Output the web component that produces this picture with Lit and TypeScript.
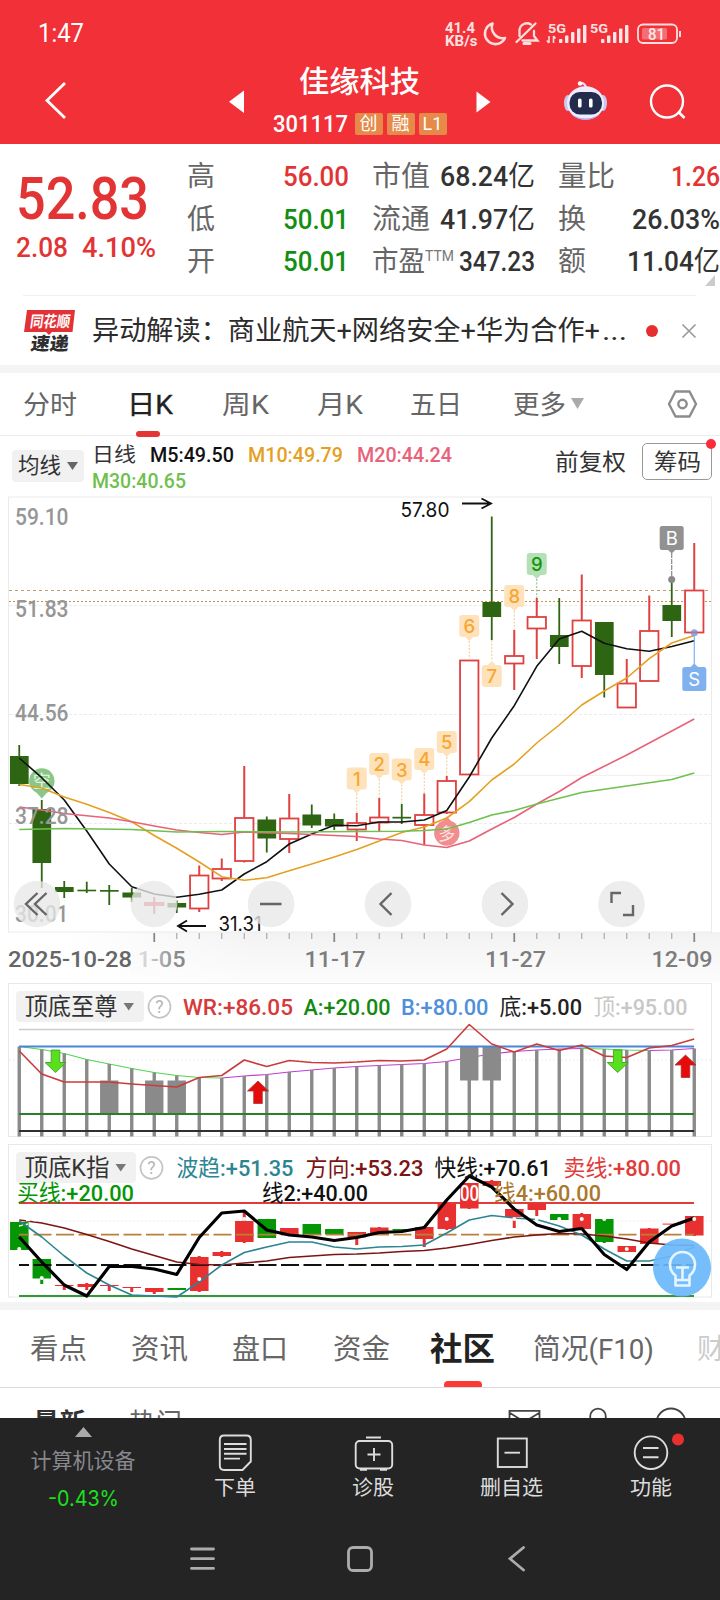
import { LitElement, html, svg, css } from "lit";
import { customElement, property } from "lit/decorators.js";

/** A line of text condensed or widened to a given advance width. */
@customElement("fit-text")
class FitText extends LitElement {
  @property({ type: Number }) w = 0;
  @property() text = "";
  static styles = css`
    :host { display: inline-block; white-space: pre; }
    .t { display: inline-block; transform-origin: 0 50%; }
    .han { font-weight: var(--han-weight, inherit); }
  `;
  firstUpdated() {
    const s = this.renderRoot.querySelector(".t") as HTMLElement;
    const n = s.getBoundingClientRect().width;
    this.style.width = this.w + "px";
    if (n) s.style.transform = `scaleX(${this.w / n})`;
  }
  render() {
    const parts = this.text.split(/([\u4e00-\u9fff]+)/).filter(Boolean);
    return html`<span class="t">${parts.map(p => /[\u4e00-\u9fff]/.test(p) ? html`<span class="han">${p}</span>` : p)}</span>`;
  }
}

const fit = (text: string, w: number, cls = "") =>
  html`<fit-text class=${cls} .w=${w} .text=${text}></fit-text>`;

/** Chart text: Han characters stay regular while figures take the given weight. */
const label = (text: string, x: number, y: number, w: number, size: number, fill: string, weight = 400) =>
  svg`<text x=${x} y=${y} font-size=${size} fill=${fill} font-weight=${weight} textLength=${w} lengthAdjust="spacingAndGlyphs">${
    text.split(/([\u4e00-\u9fff]+)/).filter(Boolean).map(p => /[\u4e00-\u9fff]/.test(p) ? svg`<tspan font-weight="400">${p}</tspan>` : p)}</text>`;

const X = (i: number) => 19.25 + 22.5 * i;
type P = [number, number];
const line = (pts: P[], color: string, width = 1.6) =>
  svg`<polyline points=${pts.map(([i, y]) => `${X(i)},${y}`).join(" ")} fill="none" stroke=${color} stroke-width=${width} stroke-linejoin="round"/>`;
const seq = (ys: number[], from = 0): P[] => ys.map((y, i) => [i + from, y]);

// up flag, high, body top, body bottom, low
const CANDLES: [number, number, number, number, number][] = [
  [0, 745, 756, 784, 786], [0, 800, 809, 863, 888], [0, 881, 887, 892, 898], [0, 881.7, 889.7, 891.3, 893],
  [0, 885, 890, 891.7, 905], [0, 888, 892.5, 897.5, 902], [1, 897, 903, 905, 914], [0, 900.5, 903, 907.5, 913],
  [1, 865.5, 875.5, 908.5, 912], [1, 858.5, 869, 878.5, 881], [1, 766, 818, 861, 862.5], [0, 816.5, 819.5, 838.5, 852.5],
  [1, 794, 818.5, 839, 853], [0, 804.5, 814.5, 825.5, 828], [0, 813.5, 819, 826.5, 830], [1, 813, 823, 829.5, 841],
  [1, 798, 817.5, 822.5, 831], [0, 804, 816.8, 818.5, 824], [1, 793.5, 815, 825, 845], [1, 776, 781, 812.5, 814],
  [1, 660.5, 660.5, 774.5, 774.5], [0, 516.5, 602, 617, 640], [1, 630, 656, 663.5, 690], [1, 598, 617, 628.5, 659],
  [0, 598, 635, 647, 664], [1, 574.5, 620.5, 666, 678], [0, 622, 622, 675, 697.5], [1, 659, 683.5, 707.5, 707.5],
  [1, 595.5, 631, 681, 681], [0, 579, 605, 621, 637], [1, 543, 590.5, 632.5, 632.5],
];
const M5 = [758, 777.7, 800, 831, 864, 886.7, 894, 897.3, 894.3, 890, 874, 861.7, 844, 834, 825.3, 825.8, 822, 822, 820, 810.5, 777, 738, 705.7, 666.3, 639, 631.3, 643.3, 648.7, 651.3, 646.5, 640.7];
const M10 = [784.5, 788, 797, 804.3, 812.5, 821.7, 835.5, 848.3, 862, 876.7, 880.3, 877.7, 870.7, 864, 857, 849.5, 841, 832.5, 827, 818, 801.7, 780, 764, 743, 725, 705, 691, 678, 658.7, 643, 635.5];
const M20: P[] = [[0, 807], [1, 810], [2, 813.5], [4, 818], [5, 821.7], [6, 826], [7, 830], [8, 832.5], [9, 834.5], [10, 832], [12, 833.5], [15, 836.5], [16, 839], [17, 840.5], [18, 845], [19, 847.5], [20, 841], [21, 829], [22, 817.5], [23, 804], [24, 791.5], [25, 777.5], [27, 755], [29, 731], [30, 719]];
const M30: P[] = [[0, 829.5], [2, 828.5], [5, 829.5], [7, 832], [9, 831.5], [12, 832], [15, 831.5], [17, 831.3], [18, 830.5], [19, 829], [20, 822.5], [21, 815], [22, 810.5], [23, 804], [25, 792.5], [29, 779.5], [30, 773]];

// number, candle index, tag top, tag below the candle?, end of leader
const TAGS: [string, number, number, boolean, number][] = [
  ["1", 15, 767.5, false, 813], ["2", 16, 753, false, 798], ["3", 17, 758.5, false, 804], ["4", 18, 748, false, 793],
  ["5", 19, 731, false, 776], ["6", 20, 615, false, 660], ["7", 21, 665, true, 640], ["8", 22, 585, false, 630], ["9", 23, 553, false, 598],
];

const BARS = [1046.5, 1049.5, 1053.5, 1059.5, 1064, 1068.5, 1072.5, 1075.5, 1077.5, 1078, 1076, 1074.5, 1072, 1070, 1068, 1066.5, 1065.5, 1064.5, 1063.5, 1061.5, 1057.5, 1054, 1051.5, 1050, 1049, 1048.5, 1049, 1050, 1050.5, 1050, 1048.5];
const WR = [1051, 1074, 1082, 1082, 1082, 1084, 1085.5, 1087, 1077.5, 1075.5, 1060, 1066.5, 1060.5, 1062.5, 1063, 1062, 1060.5, 1061, 1060, 1049, 1024.5, 1044, 1052, 1044, 1050.5, 1045, 1056, 1057.5, 1048, 1045.5, 1039];

// up flag, body top, body bottom, high, low
const K2: [number, number, number, number, number][] = [
  [0, 1222, 1250, 1222, 1250], [0, 1259, 1278.5, 1259, 1284], [1, 1285, 1286, 1285, 1290], [1, 1284, 1287, 1283, 1290],
  [1, 1285, 1286, 1285, 1291], [1, 1287, 1288, 1287, 1292], [1, 1288, 1292, 1288, 1294], [0, 1288, 1290, 1288, 1290],
  [1, 1257, 1291, 1256, 1292], [1, 1252, 1256, 1251, 1257], [1, 1221, 1242, 1212, 1243], [0, 1219, 1238, 1219, 1238],
  [1, 1228, 1234.5, 1228, 1234], [0, 1224, 1235, 1224, 1235], [0, 1229, 1234.5, 1229, 1234], [1, 1232, 1237.5, 1232, 1245],
  [1, 1227.5, 1235, 1227, 1235], [0, 1229, 1230.5, 1229, 1230], [1, 1227, 1239, 1226, 1247], [1, 1203.5, 1229, 1203, 1230],
  [1, 1183, 1208.5, 1183, 1209], [1, 1181, 1186, 1180, 1186], [1, 1209, 1217, 1209, 1228], [1, 1203.5, 1210, 1203, 1216],
  [0, 1214, 1220, 1214, 1220], [1, 1214, 1229, 1213, 1230], [0, 1219, 1242, 1219, 1243], [1, 1246, 1252, 1246, 1252],
  [1, 1228.5, 1244, 1228, 1244], [1, 1223.6, 1224.6, 1224, 1224], [1, 1216, 1235.5, 1216, 1236],
];
const FAST = [1237, 1262, 1285, 1296, 1266.5, 1266.5, 1269, 1274.5, 1237.5, 1213, 1211, 1230, 1235, 1237, 1240.5, 1237.5, 1232.5, 1231.5, 1227.5, 1200, 1176, 1187, 1209, 1225, 1231.5, 1228.5, 1254.5, 1269.5, 1242, 1226, 1218];
const TREND = [1221, 1237, 1256, 1273, 1285, 1295, 1296, 1297, 1282, 1265, 1252.5, 1247, 1242, 1242, 1247, 1249, 1247, 1246.5, 1245, 1233, 1220, 1215.5, 1218, 1219.5, 1226, 1235, 1249, 1261, 1261, 1256, 1247];
const DIR = [1220, 1223, 1228, 1234.5, 1241.5, 1249, 1255.5, 1262, 1264.5, 1265, 1263, 1261, 1257.5, 1256, 1254.5, 1254, 1253, 1251.5, 1250.5, 1248, 1244.5, 1240.5, 1237, 1235, 1233.5, 1234, 1236, 1239, 1243, 1245, 1245.5];
const DOTS: P[] = [[0, 1249], [1, 1278], [8, 1279], [10, 1219], [19, 1219], [22, 1219], [23, 1219], [24, 1219], [25, 1219], [26, 1219], [27, 1249], [30, 1219]];

@customElement("k-chart")
class KChart extends LitElement {
  static styles = css`
    :host { display: block; height: 486px; }
    svg { display: block; font-family: Roboto, "Noto Sans CJK SC", sans-serif; }
    .num { font-family: Inter, Roboto, sans-serif; }
  `;
  render() {
    const G = "#2e6512", R = "#e04040";
    return html`<svg width="720" height="486" viewBox="0 496 720 486">
      <defs>
        <linearGradient id="g" x1="0" y1="0" x2="0" y2="1"><stop offset="0" stop-color="#f0f0f0"/><stop offset="1" stop-color="#fcfcfc"/></linearGradient>
        <linearGradient id="w" x1="0" y1="0" x2="1" y2="0"><stop offset="0" stop-color="#fff"/><stop offset=".25" stop-color="#fff"/><stop offset="1" stop-color="#fff" stop-opacity="0"/></linearGradient>
        <linearGradient id="f" x1="0" y1="0" x2="1" y2="0"><stop offset="0" stop-color="#fbfbfb"/><stop offset=".25" stop-color="#fbfbfb" stop-opacity=".72"/><stop offset="1" stop-color="#fbfbfb" stop-opacity="0"/></linearGradient>
      </defs>
      <rect x="0" y="932" width="720" height="50" fill="url(#g)" opacity=".85"/>
      <rect x="0" y="932" width="260" height="50" fill="url(#w)"/>
      <rect x="8.5" y="497" width="703" height="435" fill="#fff" stroke="#ebebeb"/>
      ${[605.5, 714.5, 823.5].map(y => svg`<path d="M9 ${y}H711" stroke="#ebebeb" stroke-dasharray="3 2"/>`)}
      <path d="M479 775.3H711" stroke="#eee"/>
      <path d="M9 590.5H711" stroke="#b89d6d" stroke-dasharray="3 3"/>
      <path d="M9 601.5H711" stroke="#c6924a" stroke-dasharray="2 2"/>
      ${CANDLES.map(([up, h, a, b, l], i) => up
        ? svg`<path d="M${X(i)} ${h}V${a}M${X(i)} ${b}V${l}" stroke=${R} stroke-width="2"/><rect x=${X(i) - 9.2} y=${a} width="18.4" height=${b - a} fill="#fff" stroke=${R} stroke-width="1.8"/>`
        : svg`<path d="M${X(i)} ${h}V${l}" stroke=${G} stroke-width="1.8"/><rect x=${X(i) - 9.3} y=${a} width="18.7" height=${b - a} fill=${G}/>`)}
      <g opacity=".8">
        <path d="M36 792l5.800 6.500l5.800-6.500z" fill="#6cb96a"/><circle cx="41.800" cy="781" r="12.700" fill="#6cb96a"/>
        <text x="41.800" y="788" font-size="18" fill="#d9f0d8" text-anchor="middle">空</text>
      </g>
      <g>
        <path d="M442 822l5-5.500l5 5.500z" fill="#f28d8d"/><circle cx="446.800" cy="833" r="12.700" fill="#f28d8d"/>
        <text x="446.800" y="839.500" font-size="17" fill="#fde0e0" text-anchor="middle">多</text>
      </g>
      ${line(seq(M5), "#111")}
      ${line(seq(M10), "#e5a021")}
      ${line(M20, "#e8627a")}
      ${line(M30, "#6fc04e")}
      ${[["59.10", 525], ["51.83", 617], ["44.56", 721], ["37.28", 823.5], ["30.01", 921.5]].map(([t, y]) => label(t as string, 15, y as number, 53.5, 24, "#969696", 500))}
      ${TAGS.map(([t, i, y, below, end]) => {
        const c = t === "9" ? "#b4e0b4" : "#fee2bc", x = X(i), h = 22;
        const lead = below ? `M${x} ${end}V${y - 4}` : `M${x} ${y + h + 4}V${end}`;
        const tip = below ? `M${x - 5} ${y + 1}L${x} ${y - 4}L${x + 5} ${y + 1}z` : `M${x - 5} ${y + h - 1}L${x} ${y + h + 4}L${x + 5} ${y + h - 1}z`;
        return svg`<path d=${lead} stroke=${t === "9" ? "#7fbf7f" : "#eecb90"} stroke-dasharray="2 1.500"/><path d=${tip} fill=${c}/>
          <rect x=${x - 10} y=${y} width="20" height=${h} rx="3" fill=${c}/>
          <text class="num" x=${x} y=${y + 18} text-anchor="middle" font-size="18.500" font-weight="500" fill=${t === "9" ? "#129612" : "#f8a62f"}>${t}</text>`;
      })}
      <path d="M671.700 553V576" stroke="#888" stroke-width="1.200" stroke-dasharray="5 1"/><circle cx="671.700" cy="579.500" r="3.500" fill="#888"/>
      <path d="M667 549l4.700 4.500l4.700-4.500z" fill="#919191"/><rect x="659.700" y="526" width="24" height="24" rx="2.500" fill="#919191"/>
      <text class="num" x="671.700" y="545" font-size="18.500" fill="#fff" text-anchor="middle">B</text>
      <circle cx="694.300" cy="632.700" r="3.500" fill="#7f8fd0" opacity=".8"/><path d="M694.300 635V665" stroke="#7fb1ef" stroke-width="1.200"/>
      <path d="M689.500 668l4.800-4.500l4.800 4.500z" fill="#7fb1ef"/><rect x="682.300" y="667" width="24" height="24" rx="2.500" fill="#7fb1ef"/>
      <text class="num" x="694.300" y="686" font-size="18.500" fill="#fff" text-anchor="middle">S</text>
      <text class="num" x="400.500" y="516.500" font-size="20" fill="#111" textLength="49" lengthAdjust="spacingAndGlyphs">57.80</text>
      <path d="M462 503.500H491M481.500 498.500L491 503.500L481.500 508.500" fill="none" stroke="#111" stroke-width="1.800"/>
      <text class="num" x="218.500" y="930.700" font-size="20" fill="#111" textLength="43" lengthAdjust="spacingAndGlyphs">31.31</text>
      <path d="M206 926H178M187 920.500L178 926L187 931.500" fill="none" stroke="#111" stroke-width="1.800"/>
      ${[37, 154, 271, 388, 505, 621.5].map(x => svg`<circle cx=${x} cy="904" r="23.300" fill="#e8e8e8" opacity=".78"/>`)}
      <g fill="none" stroke="#666" stroke-width="2.400">
        <path d="M37.500 893L26 904L37.500 915M46.500 893L35 904L46.500 915M260 904H281.500M391.500 893L380.500 904L391.500 915M501.500 893L512.500 904L501.500 915M611.500 903V893H621M633 905V915H623"/>
      </g>
      ${Array.from({ length: 25 }, (_, k) => k + 6).map(i => {
        const major = (i - 6) % 8 === 0;
        return svg`<path d="M${X(i)} 933V${major ? 942 : 939}" stroke=${major ? "#888" : "#aaa"} stroke-width=${major ? 1.8 : 1.2}/>`;
      })}
      ${label("1-05", 137.5, 967.3, 48, 22, "#8a8a8a", 500)}
      <rect x="131" y="945" width="45" height="30" fill="url(#f)"/>
      ${label("2025-10-28", 8, 967.3, 124, 22, "#666", 500)}
      ${label("11-17", 304.5, 967.3, 61, 22, "#7d7d7d", 500)}
      ${label("11-27", 485, 967.3, 61, 22, "#7d7d7d", 500)}
      ${label("12-09", 651.5, 967.3, 61, 22, "#7d7d7d", 500)}
    </svg>`;
  }
}

const arrow = (x: number, y: number, up: boolean) => {
  const d = up ? "M0 0L10.500 10H4.300V22.500H-4.300V10H-10.500z" : "M0 22.500L10.500 12.500H4.300V0H-4.300V12.500H-10.500z";
  return svg`<path transform="translate(${x} ${y})" d=${d} fill=${up ? "#e60b0b" : "#58e01f"} stroke=${up ? "#a33" : "#3a9a20"} stroke-width=".8"/>`;
};
const picker = (x: number, y: number, w: number, text: string, tw: number) => svg`
  <rect x=${x} y=${y} width=${w} height="31" rx="4" fill="#f1f1f1"/>
  ${label(text, x + 8.5, y + 24.3, tw, 23.5, "#333")}
  <path d="M${x + w - 20.5} ${y + 12}h10.500l-5.250 7.500z" fill="#777"/>
  <circle cx=${x + w + 15.5} cy=${y + 15.8} r="11" fill="none" stroke="#c4c4c4" stroke-width="1.700"/>
  <text x=${x + w + 15.5} y=${y + 22} font-size="17.500" fill="#b4b4b4" text-anchor="middle">?</text>`;

@customElement("indicator-panels")
class IndicatorPanels extends LitElement {
  static styles = css`
    :host { display: block; height: 320px; }
    svg { display: block; font-family: Roboto, "Noto Sans CJK SC", sans-serif; }
  `;
  render() {
    return html`<svg width="720" height="320" viewBox="0 982 720 320">
      <rect x="8.500" y="983.500" width="703" height="153" fill="#fff" stroke="#e8e8e8"/>
      ${picker(16, 991, 128, "顶底至尊", 93)}
      ${label("WR:+86.05", 183, 1014.5, 110, 22.5, "#d63a3a", 500)}
      ${label("A:+20.00", 303.5, 1014.5, 87, 22.5, "#128a12", 500)}
      ${label("B:+80.00", 401, 1014.5, 87.5, 22.5, "#4f8fdb", 500)}
      ${label("底:+5.00", 499.5, 1014.5, 82.5, 22.5, "#222", 500)}
      ${label("顶:+95.00", 593.5, 1014.5, 94, 22.5, "#c8c8c8", 500)}
      <path d="M9 1060H711" stroke="#eee" stroke-dasharray="2 2"/>
      <path d="M19 1029.500H694" stroke="#ccc" stroke-width="1.700"/>
      ${line(seq(BARS.slice(0, 10)), "#4fd84f", 1.2)}
      ${line(seq(BARS.slice(9, 26), 9), "#c03cd0", 1.2)}
      ${line(seq(BARS.slice(25, 29), 25), "#4fd84f", 1.2)}
      ${line(seq(BARS.slice(28), 28), "#c03cd0", 1.2)}
      ${BARS.map((y, i) => svg`<path d="M${X(i)} ${y}V1136.500" stroke="#8a8a8a" stroke-width="3.400"/>`)}
      ${[[4, 1080.5], [6, 1080.5], [7, 1080.5], [20, 1047], [21, 1047]].map(([i, y]) => svg`<rect x=${X(i) - 9.2} y=${y} width="18.400" height="33.500" fill="#8a8a8a"/>`)}
      <path d="M19 1046.500H694" stroke="#4a86d8" stroke-width="2"/>
      <path d="M19 1114H694" stroke="#2a7f2a" stroke-width="2"/>
      <path d="M19 1131H694" stroke="#2c322c" stroke-width="2"/>
      ${line(seq(WR), "#c93c3c")}
      ${arrow(55.5, 1050, false)}${arrow(617.7, 1050, false)}${arrow(258, 1081, true)}${arrow(685.5, 1055, true)}

      <rect x="8.500" y="1144.500" width="703" height="152.500" fill="#fff" stroke="#e8e8e8"/>
      ${picker(16, 1152, 120, "顶底K指", 85)}
      <path d="M9 1221H711" stroke="#eee" stroke-dasharray="2 2"/>
      <path d="M19 1203H694" stroke="#e23b3b" stroke-width="1.900"/>
      ${K2.map(([up, a, b, h, l], i) => {
        const c = up ? "#e83030" : "#059605";
        return svg`<rect x=${X(i) - 9.2} y=${a} width="18.500" height=${b - a} fill=${c}/><path d="M${X(i)} ${h}V${l}" stroke=${c} stroke-width="3"/>`;
      })}
      <path d="M19 1234.600H694" stroke="#b8813a" stroke-width="1.700" stroke-dasharray="18 4.500" stroke-dashoffset="8"/>
      <path d="M19 1265H694" stroke="#111" stroke-width="2" stroke-dasharray="18 4.500" stroke-dashoffset="8"/>
      <path d="M19 1296H694" stroke="#2f9a35" stroke-width="2"/>
      ${line(seq(DIR), "#7d1414")}
      ${line(seq(TREND), "#2b8592")}
      ${line(seq(FAST), "#000", 3.2)}
      ${DOTS.map(([i, y]) => svg`<circle cx=${X(i)} cy=${y} r="2" fill="#fff"/>`)}
      <path d="M19 1226l9-2M26 1220.500h12" stroke="#fff" stroke-width="1.500" fill="none" stroke-dasharray="4 3"/>
      ${label("波趋:+51.35", 176.5, 1175.5, 117, 22.5, "#2b8592", 500)}
      ${label("方向:+53.23", 305.5, 1175.5, 118, 22.5, "#7d1414", 500)}
      ${label("快线:+70.61", 434.5, 1175.5, 116.5, 22.5, "#111", 500)}
      ${label("卖线:+80.00", 563.5, 1175.5, 117.5, 22.5, "#e23b3b", 500)}
      ${label("买线:+20.00", 17, 1201.3, 117, 22.5, "#059605", 500)}
      ${label("线2:+40.00", 262, 1201.3, 106, 22.5, "#111", 500)}
      ${label("00", 460, 1201.3, 19, 22.5, "#fff", 500)}
      ${label("线4:+60.00", 494, 1201.3, 107, 22.5, "#aa782c", 500)}
      <circle cx="682" cy="1267.500" r="29" fill="#6ab8fb" opacity=".92"/>
      <g fill="none" stroke="#e6f5ff" stroke-width="2.600" stroke-linejoin="round">
        <path d="M675.500 1280V1275.500C672 1273 670 1269.500 670 1264.500A12.500 12.500 0 0 1 695 1264.500C695 1269.500 693 1273 689.500 1275.500V1280z M675.500 1280V1285.500H689.500V1280M676 1267.500H689M682.500 1267.500V1279"/>
      </g>
    </svg>`;
  }
}

@customElement("app-root")
class AppRoot extends LitElement {
  static styles = css`
    :host { display: block; width: 720px; height: 1600px; overflow: hidden; background: #fff; font-family: Roboto, "Noto Sans CJK SC", sans-serif; color: #333; }
    * { box-sizing: border-box; }
    svg { display: block; flex: none; font-family: Roboto, "Noto Sans CJK SC", sans-serif; }
    .head { height: 144px; background: #f13037; color: #fff; }
    .status { display: flex; height: 62px; padding-left: 38px; justify-content: space-between; }
    .time { font-size: 25px; line-height: 68px; }
    .nav { display: grid; grid-template-columns: 244px 232px 244px; height: 82px; }
    .title { display: flex; flex-direction: column; align-items: center; padding-right: 1px; }
    .name { font-size: 30px; line-height: 40px; height: 38px; font-weight: 500; }
    .code { display: flex; align-items: center; height: 47px; gap: 4px; }
    .num { font-size: 24px; font-weight: 500; line-height: 24px; margin-right: 3px; }
    .badge { width: 28px; height: 22px; background: #e58a49; border-radius: 2px; font-size: 18px; line-height: 22px; text-align: center; }
    .quote { display: grid; grid-template-columns: 170px 1fr; height: 151px; padding: 0 0 0 16px; }
    .left { padding-top: 25px; color: #e23434; font-weight: 500; }
    .price { font-size: 59.5px; line-height: 60px; }
    .chg { display: flex; gap: 14px; font-size: 28.5px; line-height: 36px; margin-top: 1px; }
    .grid { display: grid; grid-template-columns: 163px 186px 185px; grid-auto-rows: 42.5px; padding-top: 12px; position: relative; }
    .cell { display: flex; justify-content: space-between; align-items: center; font-size: 28px; line-height: 42px; }
    .cell.a { padding-left: 1px; }
    .cell.b { padding-left: 23px; }
    .cell.c { padding-left: 23px; }
    .k { color: #666; display: flex; }
    .ttm { font-size: 14.5px; line-height: 32px; color: #777; }
    .v { font-weight: 500; font-size: 28.5px; --han-weight: 400; }
    .red { color: #e23434; }
    .green { color: #128f12; }
    .corner { position: absolute; right: 5px; bottom: 9px; }
    .news { display: flex; height: 70px; margin: 0 24px 0 23px; border-top: 1px solid #f1f1f1; align-items: center; }
    .newst { display: flex; gap: 2px; font-size: 27px; line-height: 40px; margin: 0 18px 0 16px; color: #2c2c2c; }
    .band { height: 8px; background: #f4f4f4; }
    .tabs { display: grid; grid-template-columns: 23px 104px 95px 95px 93px 103px 144px 1fr; height: 63px; border-bottom: 1px solid #ececec; font-size: 26px; line-height: 64px; color: #666; }
    .tab { position: relative; }
    .on { color: #222; -webkit-text-stroke: .35px #222; }
    .on::after { content: ""; position: absolute; left: 9px; bottom: 0; width: 24px; height: 6px; border-radius: 3px; background: #e43434; }
    .ma { display: flex; height: 60px; padding-left: 12px; }
    .mabtn { display: flex; flex: none; align-items: center; width: 72px; height: 32px; margin-top: 14px; background: #f1f1f1; border-radius: 4px; padding-left: 6px; gap: 6px; font-size: 21.5px; line-height: 32px; }
    .mal { width: 471px; flex: none; padding: 6px 0 0 8px; font-size: 20.5px; line-height: 26px; font-weight: 500; }
    .row { display: flex; }
    .mas { display: flex; gap: 14px; }
    .reg { font-weight: 400; }
    .c5 { color: #111; }
    .c10 { color: #e5a021; }
    .c20 { color: #e8627a; }
    .c30 { color: #6fc04e; }
    .fq { flex: none; font-size: 23px; line-height: 53px; }
    .chip { position: relative; flex: none; width: 70px; height: 37px; border: 1.5px solid #999; border-radius: 5px; margin: 7px 0 0 16px; font-size: 23px; line-height: 37px; padding-left: 11px; }
    .chip::after { content: ""; position: absolute; width: 10px; height: 10px; border-radius: 5px; background: #fb2b3b; right: -5px; top: -5px; }
    .band2 { height: 8px; background: #f4f4f4; }
    .btabs { display: grid; grid-template-columns: 30px 101px 101px 101px 97px 103px 164px 1fr; height: 78px; border-bottom: 1px solid #dcdcdc; font-size: 28px; line-height: 79px; color: #666; overflow: hidden; }
    .bon { position: relative; color: #222; font-weight: 700; font-size: 32px; }
    .bon::after { content: ""; position: absolute; left: 14px; bottom: 0; width: 38px; height: 8px; border-radius: 4px; background: #fb3a35; }
    .fade { color: #ccc; }
    .feed { display: flex; height: 30px; overflow: hidden; padding: 21px 0 0 33px; font-size: 26px; line-height: 28px; }
    .hot { margin-left: 43px; color: #666; }
    .new { font-weight: 700; }
    .feed svg { margin: -21px 0 0 auto; }
    .foot { display: flex; flex-direction: column; height: 182px; background: #242424; color: #dcdcdc; }
    .bar { display: grid; grid-template-columns: 166px 138px 138px 139px 139px; height: 100px; }
    .idx { display: flex; flex-direction: column; align-items: center; color: #888890; font-size: 21px; }
    .idx svg { margin-top: 9px; }
    .in { line-height: 36px; margin-top: 6px; }
    .ip { color: #1ce01c; font-family: Inter, sans-serif; font-size: 21px; line-height: 30px; margin-top: 5px; }
    .item { display: flex; flex-direction: column; align-items: center; font-size: 20.5px; line-height: 29px; }
  `;
  render() {
    const tri = (w: number, h: number, c: string) => html`<svg width=${w} height=${h} viewBox="0 0 10 10" preserveAspectRatio="none"><path d="M0 0H10L5 10z" fill=${c}/></svg>`;
    const bars = (x: number, n: number, w: number) => Array.from({ length: n }, (_, i) => {
      const h = 4 + i * (14 / (n - 1));
      return svg`<rect x=${x + i * w} y=${43 - h} width="3.400" height=${h} rx=".8" fill="#fff" opacity=".88"/>`;
    });
    const rows = [
      ["高", "56.00", "red", "市值", "68.24亿", 95, "量比", 57, "1.26", 49, "red"],
      ["低", "50.01", "green", "流通", "41.97亿", 95, "换", 28, "26.03%", 88, ""],
      ["开", "50.01", "green", "市盈", "347.23", 76, "额", 28, "11.04亿", 93, ""],
    ] as any[];
    return html`
      <div class="head">
        <div class="status">
          <div class="time">${fit("1:47", 46)}</div>
          <svg width="284" height="62" viewBox="436 0 284 62">
            <g fill="#fbe0e0" font-weight="700">
              <text x="445" y="33" font-size="15" textLength="30" lengthAdjust="spacingAndGlyphs">41.4</text>
              <text x="445" y="45.500" font-size="14.500" textLength="32.500" lengthAdjust="spacingAndGlyphs">KB/s</text>
              <text x="548" y="32.500" font-size="13" textLength="18" lengthAdjust="spacingAndGlyphs">5G</text>
              <text x="590" y="32.500" font-size="13" textLength="18" lengthAdjust="spacingAndGlyphs">5G</text>
              <text x="648" y="39.500" font-size="16" font-weight="500" textLength="17" lengthAdjust="spacingAndGlyphs">81</text>
            </g>
            <path d="M492.500 23.500A10.500 10.500 0 1 0 505 38A11 11 0 0 1 492.500 23.500z" fill="none" stroke="#fbdede" stroke-width="2.600" stroke-linejoin="round"/>
            <g fill="none" stroke="#fbdede" stroke-width="2.300" stroke-linecap="round">
              <path d="M516.500 42L535.500 23.500M519.500 36V30A7.500 7.500 0 0 1 531 24.500M534 31V36L537.500 40.500H522.500"/><path d="M524 43.500H530" stroke-width="3"/>
            </g>
            ${bars(559, 5, 6)}${bars(601, 5, 6)}
            <path d="M549 36v7M546.800 40.500l2.200 2.500M553.500 43v-7M555.500 38.500l-2-2.500" stroke="#fbdede" stroke-width="1.600" fill="none"/>
            <rect x="638" y="24.500" width="39" height="18.500" rx="5" fill="none" stroke="#fbdede" stroke-width="1.800"/>
            <rect x="642" y="28" width="25" height="11.500" rx="1.500" fill="#fff" opacity=".3"/>
            <path d="M680 31V37" stroke="#fbdede" stroke-width="2"/>
          </svg>
        </div>
        <div class="nav">
          <svg width="244" height="82" viewBox="0 62 244 82"><path d="M65 83L47 100.500L65 118" fill="none" stroke="#fff" stroke-width="2.800"/><path d="M244 90.500V113L229 101.700z" fill="#fff"/></svg>
          <div class="title">
            <div class="name">${fit("佳缘科技", 121)}</div>
            <div class="code">${fit("301117", 75, "num")}<span class="badge">创</span><span class="badge">融</span><span class="badge">L1</span></div>
          </div>
          <svg width="244" height="82" viewBox="476 62 244 82">
            <path d="M476.500 91.500V112.500L490.500 102z" fill="#fff"/>
            <path d="M586 88C586 84.500 583 82.500 580 83.500" fill="none" stroke="#e6e4fb" stroke-width="2.200"/><circle cx="580" cy="83.500" r="2.200" fill="#fff"/>
            <ellipse cx="568" cy="103" rx="4" ry="8" fill="#c9c8f2"/><ellipse cx="603" cy="103" rx="4" ry="8" fill="#c9c8f2"/>
            <ellipse cx="585.500" cy="103" rx="18.500" ry="16.800" fill="#eeedfd"/><path d="M572 115Q585.500 122 599 115Q594 119.800 585.500 119.800T572 115z" fill="#a9a4f0"/>
            <rect x="569.500" y="92" width="32.500" height="22.500" rx="10.500" fill="#242c4e"/>
            <rect x="578" y="98.500" width="3.600" height="9" rx="1.600" fill="#fff"/><rect x="589" y="98.500" width="3.600" height="9" rx="1.600" fill="#fff"/>
            <circle cx="667" cy="101.500" r="16" fill="none" stroke="#fff" stroke-width="2.400"/><path d="M678 111.500L684.500 118" stroke="#fff" stroke-width="2.600"/>
          </svg>
        </div>
      </div>
      <div class="quote">
        <div class="left">
          <div class="price">${fit("52.83", 133)}</div>
          <div class="chg">${fit("2.08", 52)}${fit("4.10%", 74)}</div>
        </div>
        <div class="grid">
          ${rows.map((r, i) => html`
            <div class="cell a"><span class="k">${fit(r[0], 28)}</span>${fit(r[1], 66, "v " + r[2])}</div>
            <div class="cell b"><span class="k">${fit(r[3], i === 2 ? 53 : 58)}${i === 2 ? fit("TTM", 29, "ttm") : ""}</span>${fit(r[4], r[5], "v")}</div>
            <div class="cell c"><span class="k">${fit(r[6], r[7])}</span>${fit(r[8], r[9], "v " + r[10])}</div>`)}
          <svg class="corner" width="10" height="11"><path d="M10 0V11H0z" fill="#ccc"/></svg>
        </div>
      </div>
      <div class="news">
        <svg width="53" height="44" viewBox="23 308 53 44">
          <path d="M27 309H75L72.500 331H52L49 334L46 331H24z" fill="#e23236"/>
          <text transform="translate(29.500 325.500) skewX(-8)" font-size="15.500" font-weight="700" fill="#fff" textLength="40" lengthAdjust="spacingAndGlyphs">同花顺</text>
          <text transform="translate(30 348.500) skewX(-8)" font-size="18" font-weight="900" fill="#2e2e30" textLength="38" lengthAdjust="spacingAndGlyphs">速递</text>
        </svg>
        <div class="newst">${fit("异动解读：商业航天+网络安全+华为合作+", 508)}${fit("...", 25)}</div>
        <svg width="52" height="20" viewBox="645 320 52 20"><circle cx="652" cy="330" r="6" fill="#e62e2e"/><path d="M682.500 323.500L695.500 336.500M695.500 323.500L682.500 336.500" stroke="#999" stroke-width="1.600"/></svg>
      </div>
      <div class="band"></div>
      <div class="tabs">
        <span></span><span class="tab">${fit("分时", 54)}</span><span class="tab on">${fit("日K", 46)}</span><span class="tab">${fit("周K", 47)}</span>
        <span class="tab">${fit("月K", 46)}</span><span class="tab">${fit("五日", 52)}</span>
        <span class="row">${fit("更多", 53)}<svg width="18" height="62" viewBox="0 0 18 62"><path d="M5 25H18L11.500 36z" fill="#aaa"/></svg></span>
        <svg width="62" height="62" viewBox="657.500 373 62 62"><path d="M676 391.500H690L696.500 404L690 416.500H676L669.500 404z" fill="none" stroke="#8c8c8c" stroke-width="2.400" stroke-linejoin="round"/><circle cx="683" cy="404" r="4.200" fill="none" stroke="#8c8c8c" stroke-width="2.400"/></svg>
      </div>
      <div class="ma">
        <div class="mabtn">${fit("均线", 43)}${tri(11, 8, "#666")}</div>
        <div class="mal">
          <div class="mas">${fit("日线", 44, "reg")}${fit("M5:49.50", 84, "c5")}${fit("M10:49.79", 95, "c10")}${fit("M20:44.24", 95, "c20")}</div>
          <div class="mas">${fit("M30:40.65", 94, "c30")}</div>
        </div>
        <div class="fq">${fit("前复权", 71)}</div>
        <div class="chip">${fit("筹码", 47)}</div>
      </div>
      <k-chart></k-chart>
      <indicator-panels></indicator-panels>
      <div class="band2"></div>
      <div class="btabs">
        <span></span><span>${fit("看点", 57)}</span><span>${fit("资讯", 57)}</span><span>${fit("盘口", 56)}</span><span>${fit("资金", 57)}</span>
        <span class="bon">${fit("社区", 65)}</span><span>${fit("简况(F10)", 121)}</span><span class="fade">${fit("财", 28)}</span>
      </div>
      <div class="feed">
        ${fit("最新", 53, "new")}${fit("热门", 53, "hot")}
        <svg width="220" height="30" viewBox="500 1388 220 30"><g fill="none" stroke="#444" stroke-width="1.800"><path d="M509.500 1420V1410.800H539.500V1420M510 1413L524.500 1422L539 1413"/><circle cx="598" cy="1416.500" r="7.800"/><circle cx="671" cy="1423" r="14.500"/></g></svg>
      </div>
      <div class="foot">
        <div class="bar">
          <div class="idx"><svg width="17" height="10"><path d="M8.500 0L17 10H0z" fill="#aaa"/></svg>${fit("计算机设备", 105, "in")}${fit("-0.43%", 71, "ip")}</div>
          <div class="item"><svg width="138" height="56" viewBox="166 1418 138 56"><g fill="none" stroke="#dcdcdc" stroke-width="1.900"><path d="M219.800 1440Q219.800 1435.500 224 1435.500H246.500Q250.800 1435.500 250.800 1440V1461.500L242.500 1470H224Q219.800 1470 219.800 1465.500zM224 1444H246.500M224 1449H246.500M224 1453.800H246.500M224 1458.600H240"/></g></svg>${fit("下单", 42)}</div>
          <div class="item"><svg width="138" height="56" viewBox="304 1418 138 56"><g fill="none" stroke="#dcdcdc" stroke-width="1.900"><rect x="355.700" y="1441" width="36.500" height="27.500" rx="4"/><path d="M366 1437.500H381M367.500 1454.500H380.500M374 1448V1461M360 1469.700H367M380 1469.700H387"/></g></svg>${fit("诊股", 42)}</div>
          <div class="item"><svg width="138" height="56" viewBox="443 1418 138 56"><g fill="none" stroke="#dcdcdc" stroke-width="1.900"><rect x="497.800" y="1438.500" width="29" height="28.500"/><path d="M504.500 1452.700H520"/></g></svg>${fit("删自选", 63)}</div>
          <div class="item"><svg width="138" height="56" viewBox="582 1418 138 56"><g fill="none" stroke="#dcdcdc" stroke-width="1.900"><circle cx="651" cy="1452.700" r="16.300"/><path d="M643 1448H658.500M643 1457.300H658.500"/></g><circle cx="678" cy="1439.500" r="6" fill="#e83030"/></svg>${fit("功能", 42)}</div>
        </div>
        <svg width="720" height="82" viewBox="0 1518 720 82"><g fill="none" stroke="#acacac" stroke-width="2.800" stroke-linecap="round"><path d="M191.500 1549H213.500M191.500 1558.700H213.500M191.500 1568.400H213.500M523.500 1547.500L510 1558.700L523.500 1570"/><rect x="348.500" y="1547.500" width="23" height="23" rx="4.500"/></g></svg>
      </div>
    `;
  }
}
